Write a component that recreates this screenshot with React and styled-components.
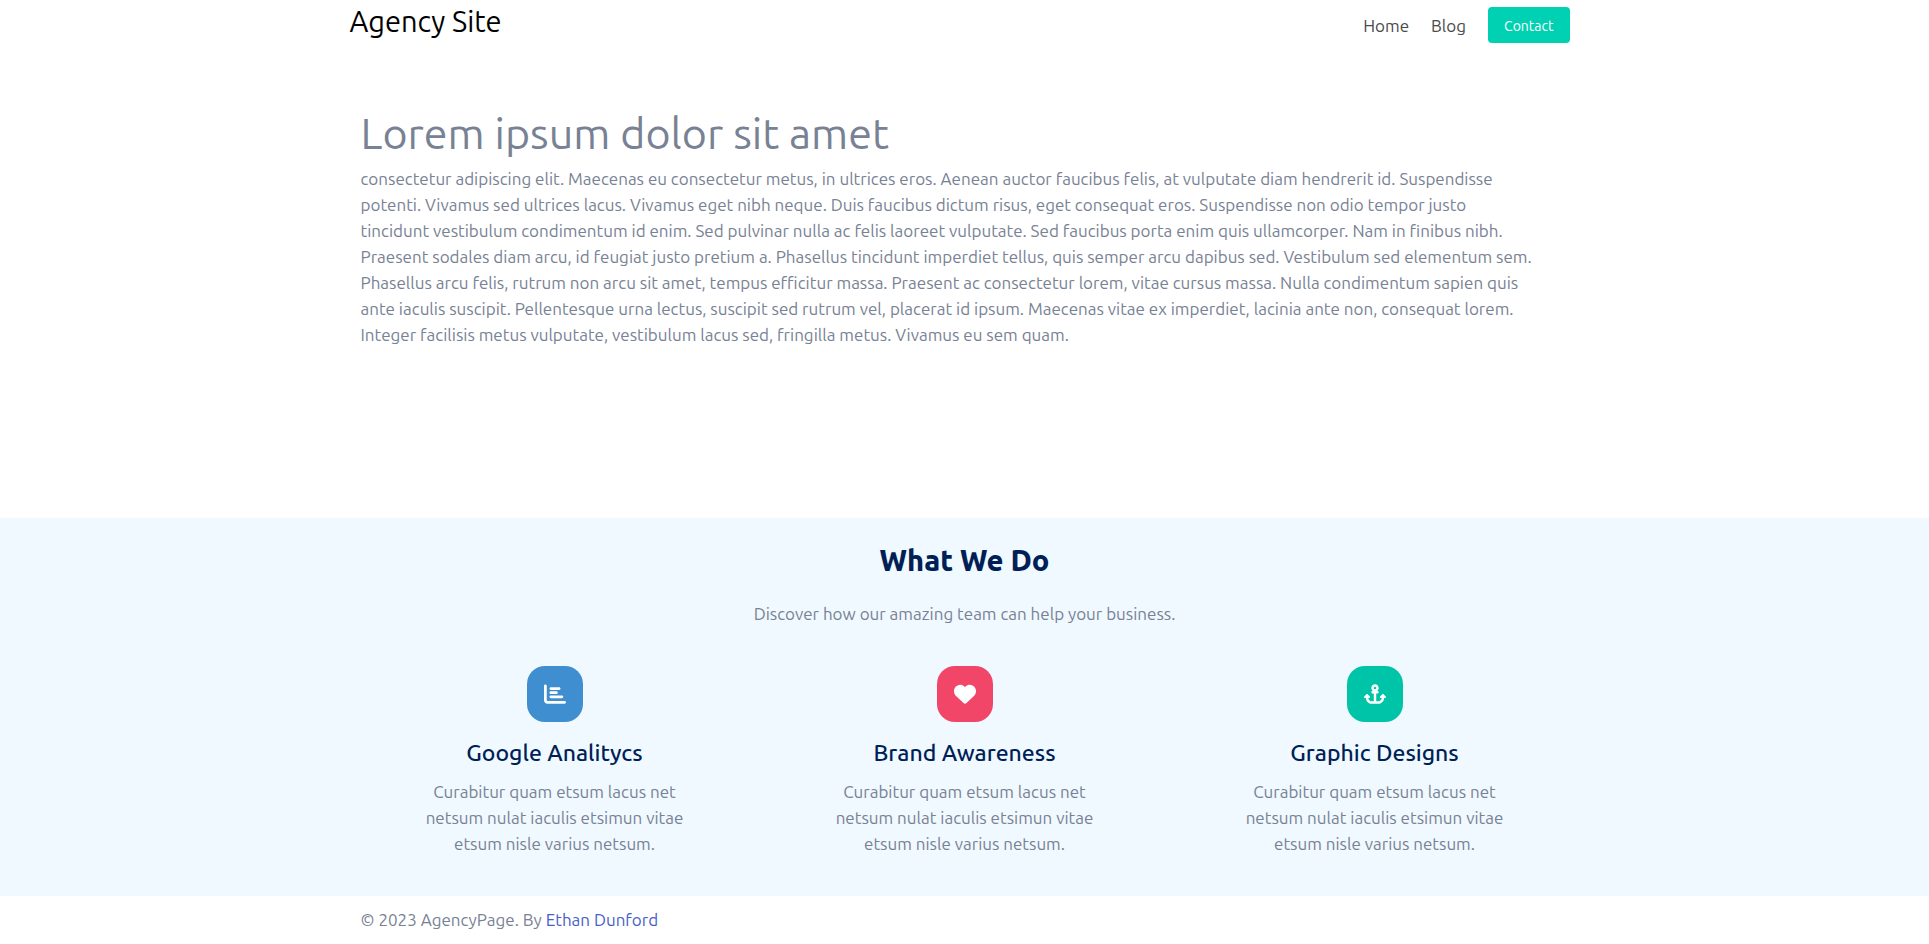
import React from "react";
import styled, { createGlobalStyle } from "styled-components";
import { FaAnchor, FaChartBar, FaHeart } from "react-icons/fa6";

const GlobalStyle = createGlobalStyle`
  *, *::before, *::after {
    box-sizing: border-box;
  }
  body {
    margin: 0;
    background: #ffffff;
    color: #788294;
    font-family: Ubuntu, "Noto Sans", sans-serif;
    font-size: 17px;
    line-height: 26px;
  }
  h1, h2, h3, p {
    margin: 0;
  }
`;

const Container = styled.div`
  width: 100%;
  max-width: 1230px;
  margin: 0 auto;
`;

const Header = styled(Container).attrs({ as: "header" })`
  display: flex;
  justify-content: space-between;
  align-items: flex-start;
  padding-right: 10px;
`;

const Brand = styled.a`
  color: #000000;
  font-size: 29px;
  line-height: 43px;
  text-decoration: none;
`;

const Nav = styled.nav`
  display: flex;
  align-items: center;
  gap: 22px;
  padding: 7px 0;
`;

const NavLink = styled.a`
  padding-top: 2px;
  color: #4a4a4a;
  text-decoration: none;
`;

const ContactButton = styled.button`
  height: 36px;
  padding: 2px 16px 0;
  border: 0;
  border-radius: 4px;
  background: #00d1b2;
  color: #ffffff;
  font-family: inherit;
  font-size: 14px;
  line-height: 22px;
  cursor: pointer;
`;

const Hero = styled(Container).attrs({ as: "section" })`
  min-height: 468px;
  padding: 51px 11px 0;
`;

const HeroTitle = styled.h1`
  font-size: 43px;
  font-weight: 400;
  line-height: 65px;
`;

const HeroText = styled.p`
  max-width: 1176px;
`;

const Services = styled.section`
  padding: 20px 0 39px;
  background: #f0f9ff;
  text-align: center;
`;

const SectionTitle = styled.h2`
  color: #001f56;
  font-size: 29px;
  font-weight: 800;
  line-height: 44px;
`;

const SectionLead = styled.p`
  margin: 19px 0 39px;
`;

const ServiceGrid = styled(Container)`
  display: grid;
  grid-template-columns: repeat(3, 1fr);
`;

const Service = styled.article`
  display: flex;
  flex-direction: column;
  align-items: center;
  padding: 0 60px;
`;

const IconTile = styled.span`
  display: flex;
  align-items: center;
  justify-content: center;
  width: 56px;
  height: 56px;
  margin-bottom: 13px;
  border-radius: 18px;
  background: ${(props) => props.$color};
  color: #ffffff;
  font-size: 22px;
`;

const ServiceTitle = styled.h3`
  margin-bottom: 9px;
  color: #001f56;
  font-size: 23px;
  font-weight: 500;
  line-height: 35px;
`;

const Footer = styled(Container).attrs({ as: "footer" })`
  padding: 11px;
`;

const FooterLink = styled.a`
  color: #485fc7;
  text-decoration: none;
`;

const services = [
  { title: "Google Analitycs", color: "#3e8ed0", Icon: FaChartBar },
  { title: "Brand Awareness", color: "#f14668", Icon: FaHeart },
  { title: "Graphic Designs", color: "#00c4a7", Icon: FaAnchor },
];

export default function App() {
  return (
    <>
      <GlobalStyle />
      <Header>
        <Brand href="#">Agency Site</Brand>
        <Nav>
          <NavLink href="#">Home</NavLink>
          <NavLink href="#">Blog</NavLink>
          <ContactButton type="button">Contact</ContactButton>
        </Nav>
      </Header>
      <main>
        <Hero>
          <HeroTitle>Lorem ipsum dolor sit amet</HeroTitle>
          <HeroText>
            consectetur adipiscing elit. Maecenas eu consectetur metus, in
            ultrices eros. Aenean auctor faucibus felis, at vulputate diam
            hendrerit id. Suspendisse potenti. Vivamus sed ultrices lacus.
            Vivamus eget nibh neque. Duis faucibus dictum risus, eget consequat
            eros. Suspendisse non odio tempor justo tincidunt vestibulum
            condimentum id enim. Sed pulvinar nulla ac felis laoreet vulputate.
            Sed faucibus porta enim quis ullamcorper. Nam in finibus nibh.
            Praesent sodales diam arcu, id feugiat justo pretium a. Phasellus
            tincidunt imperdiet tellus, quis semper arcu dapibus sed. Vestibulum
            sed elementum sem. Phasellus arcu felis, rutrum non arcu sit amet,
            tempus efficitur massa. Praesent ac consectetur lorem, vitae cursus
            massa. Nulla condimentum sapien quis ante iaculis suscipit.
            Pellentesque urna lectus, suscipit sed rutrum vel, placerat id
            ipsum. Maecenas vitae ex imperdiet, lacinia ante non, consequat
            lorem. Integer facilisis metus vulputate, vestibulum lacus sed,
            fringilla metus. Vivamus eu sem quam.
          </HeroText>
        </Hero>
        <Services>
          <SectionTitle>What We Do</SectionTitle>
          <SectionLead>
            Discover how our amazing team can help your business.
          </SectionLead>
          <ServiceGrid>
            {services.map(({ title, color, Icon }) => (
              <Service key={title}>
                <IconTile $color={color}>
                  <Icon aria-hidden="true" />
                </IconTile>
                <ServiceTitle>{title}</ServiceTitle>
                <p>
                  Curabitur quam etsum lacus net netsum nulat iaculis etsimun
                  vitae etsum nisle varius netsum.
                </p>
              </Service>
            ))}
          </ServiceGrid>
        </Services>
      </main>
      <Footer>
        © 2023 AgencyPage. By <FooterLink href="#">Ethan Dunford</FooterLink>
      </Footer>
    </>
  );
}
